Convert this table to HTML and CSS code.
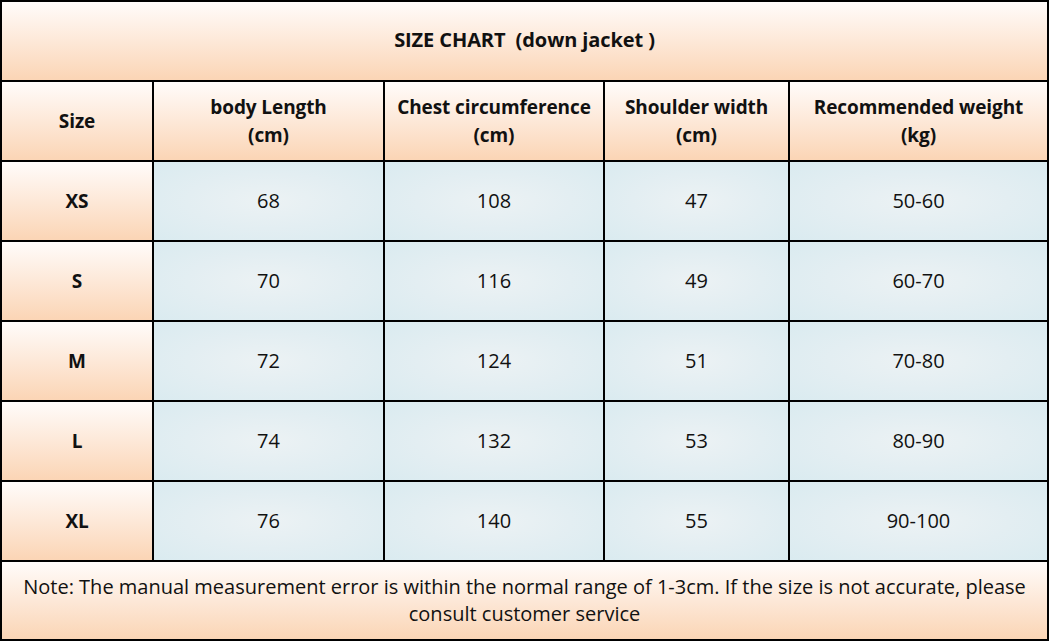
FILE: index.html
```html
<!DOCTYPE html>
<html lang="en">
<head>
<meta charset="utf-8">
<title>Size Chart</title>
<link rel="stylesheet" href="styles.css">
</head>
<body>
<div class="chart">
  <div class="cell peach title span">SIZE CHART&nbsp;&nbsp;(down jacket )</div>

  <div class="cell peach head">Size</div>
  <div class="cell peach head">body Length<br>(cm)</div>
  <div class="cell peach head">Chest circumference<br>(cm)</div>
  <div class="cell peach head">Shoulder width<br>(cm)</div>
  <div class="cell peach head">Recommended weight<br>(kg)</div>

  <div class="cell peach head">XS</div>
  <div class="cell blue">68</div>
  <div class="cell blue">108</div>
  <div class="cell blue">47</div>
  <div class="cell blue">50-60</div>

  <div class="cell peach head">S</div>
  <div class="cell blue">70</div>
  <div class="cell blue">116</div>
  <div class="cell blue">49</div>
  <div class="cell blue">60-70</div>

  <div class="cell peach head">M</div>
  <div class="cell blue">72</div>
  <div class="cell blue">124</div>
  <div class="cell blue">51</div>
  <div class="cell blue">70-80</div>

  <div class="cell peach head">L</div>
  <div class="cell blue">74</div>
  <div class="cell blue">132</div>
  <div class="cell blue">53</div>
  <div class="cell blue">80-90</div>

  <div class="cell peach head">XL</div>
  <div class="cell blue">76</div>
  <div class="cell blue">140</div>
  <div class="cell blue">55</div>
  <div class="cell blue">90-100</div>

  <div class="cell peach note span">Note: The manual measurement error is within the normal range of 1-3cm. If the size is not accurate, please consult customer service</div>
</div>
</body>
</html>
```

FILE: styles.css
```css
html, body {
  margin: 0;
  padding: 0;
  background: #ffffff;
}

.chart {
  width: 1049px;
  height: 641px;
  box-sizing: border-box;
  display: grid;
  grid-template-columns: 150px 229px 218px 183px 257px;
  grid-template-rows: 78px 78px 78px 78px 78px 78px 78px 77px;
  gap: 2px;
  padding: 2px;
  background: #000;
  font-family: "Open Sans", "Noto Sans", sans-serif;
  color: #111;
}

.cell {
  display: flex;
  align-items: center;
  justify-content: center;
  text-align: center;
  font-size: 20px;
  line-height: 28px;
}

.span {
  grid-column: 1 / -1;
}

.peach {
  background: linear-gradient(to bottom, #fffcfa 0%, #fde8d8 50%, #fbd5b5 100%);
}

.blue {
  background: radial-gradient(ellipse at center, #ecf2f4 0%, #e3eef2 50%, #daebf0 100%);
}

.head, .title {
  font-weight: 700;
  font-size: 19px;
  letter-spacing: -0.1px;
}

.title {
  font-size: 20px;
  padding-bottom: 2px;
}

.note {
  line-height: 27px;
  padding: 0 6px 2px;
}
```
